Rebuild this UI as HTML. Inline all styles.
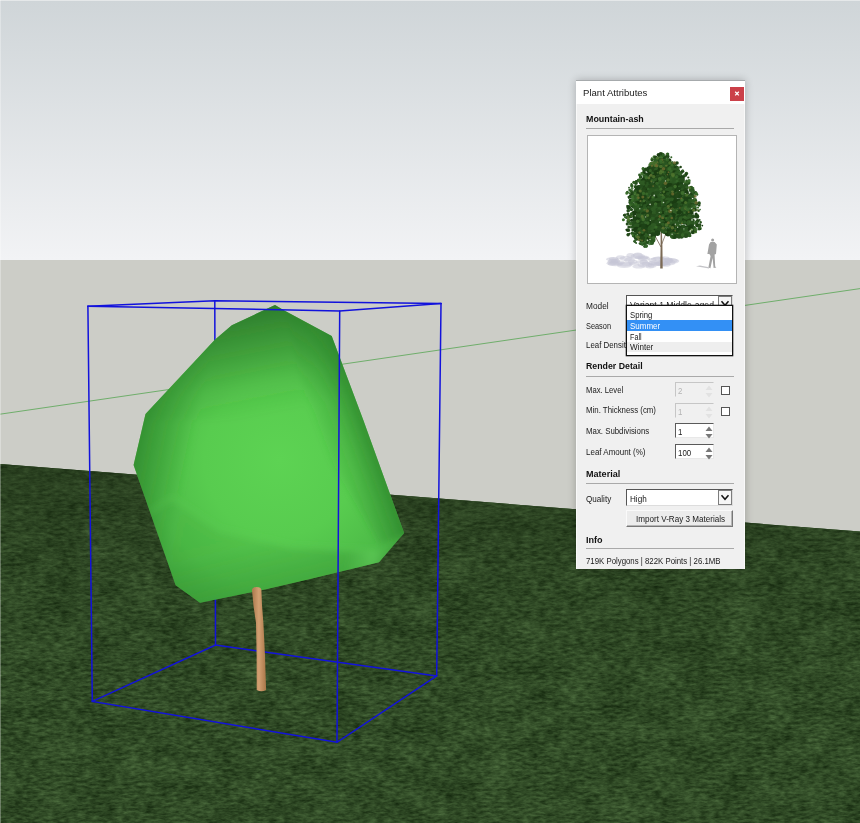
<!DOCTYPE html>
<html><head><meta charset="utf-8"><title>Plant Attributes</title>
<style>
html,body{margin:0;padding:0;}
body{width:860px;height:823px;overflow:hidden;position:relative;background:#cccdc7;font-family:"Liberation Sans",sans-serif;font-size:9px;color:#1a1a1a;}
#scene{position:absolute;left:0;top:0;}
#panel{position:absolute;left:576px;top:80px;width:169px;height:488px;background:#f0f0f0;border-top:1px solid #a6aaac;box-shadow:0 0 8px 0 rgba(0,0,0,0.24), inset -1px 0 0 #f9f9f9, inset 1px 0 0 #f9f9f9;}
#title{position:absolute;left:0;top:0;width:169px;height:22.5px;background:#fff;}
.t{position:absolute;white-space:nowrap;line-height:12px;height:12px;transform-origin:0 50%;}
.b{font-weight:bold;color:#111;}
.sep{position:absolute;left:10px;width:148px;height:1px;background:#a9a9a9;}
#close{position:absolute;left:154px;top:6px;width:14px;height:14px;background:#cb4049;}
.spin{position:absolute;left:99px;width:39px;height:15px;box-sizing:border-box;background:#fff;border-top:1px solid #5a5a5a;border-left:1px solid #5a5a5a;border-right:1px solid #e8e8e8;border-bottom:1px solid #e8e8e8;}
.spin.dis{background:#f0f0f0;border-top:1px solid #c6c6c6;border-left:1px solid #c6c6c6;border-right:1px solid #f0f0f0;border-bottom:1px solid #f0f0f0;color:#b4b4b4;}
.chk{position:absolute;left:145px;width:9px;height:9px;box-sizing:border-box;border:1px solid #555;background:#fff;}
.combo{position:absolute;left:50px;width:107px;height:17px;box-sizing:border-box;background:#fff;border-top:1px solid #555;border-left:1px solid #555;border-right:1px solid #ddd;border-bottom:1px solid #ddd;}
.cbtn{position:absolute;right:0;top:0;width:14px;height:15px;background:#f6f6f6;border:1px solid #7d7d7d;box-sizing:border-box;}
#list{position:absolute;left:50px;top:224px;width:107px;height:51px;box-sizing:border-box;border:1px solid #111;background:#fff;box-shadow:0 0 0 0.3px #111;}
#btn{position:absolute;left:50px;top:429px;width:107px;height:17px;box-sizing:border-box;background:#ececec;border-top:1px solid #fafafa;border-left:1px solid #fafafa;border-right:1px solid #777;border-bottom:1px solid #777;box-shadow:inset -1px -1px 0 #b5b5b5;}
</style></head><body>
<svg id="scene" width="860" height="823" viewBox="0 0 860 823">
<defs>
<linearGradient id="sky" x1="0" y1="0" x2="0" y2="1"><stop offset="0" stop-color="#cfd5d8"/><stop offset="1" stop-color="#f2f3f5"/></linearGradient>
<linearGradient id="grassg" x1="0" y1="0" x2="0" y2="1"><stop offset="0" stop-color="#29451f"/><stop offset="0.35" stop-color="#2d4d25"/><stop offset="1" stop-color="#305328"/></linearGradient>
<filter id="noise" x="0" y="0" width="100%" height="100%" color-interpolation-filters="sRGB">
<feTurbulence type="fractalNoise" baseFrequency="0.13 0.36" numOctaves="3" seed="4"/>
<feColorMatrix type="matrix" values="1 0 0 0 0  1 0 0 0 0  1 0 0 0 0  0 0 0 0 1" result="n1"/>
<feTurbulence type="fractalNoise" baseFrequency="0.025 0.05" numOctaves="2" seed="9"/>
<feColorMatrix type="matrix" values="1 0 0 0 0  1 0 0 0 0  1 0 0 0 0  0 0 0 0 1" result="n2"/>
<feComposite in="n1" in2="n2" operator="arithmetic" k1="0" k2="0.85" k3="0.4" k4="-0.125" result="n"/>
<feColorMatrix in="n" type="matrix" values="0.27 0 0 0 0.055  0.33 0 0 0 0.127  0.23 0 0 0 0.034  0 0 0 0 1"/>
</filter>
<linearGradient id="gshade" x1="0" y1="0" x2="0" y2="1"><stop offset="0" stop-color="#1c2c14" stop-opacity="0.42"/><stop offset="0.3" stop-color="#1c2c14" stop-opacity="0.12"/><stop offset="0.7" stop-color="#1c2c14" stop-opacity="0"/></linearGradient>
<radialGradient id="crown" gradientUnits="userSpaceOnUse" cx="280" cy="460" r="190" fx="280" fy="460">
<stop offset="0" stop-color="#5dd353"/><stop offset="0.4" stop-color="#58cc4f"/><stop offset="0.68" stop-color="#4dbb47"/><stop offset="0.88" stop-color="#3ea23a"/><stop offset="1" stop-color="#348f32"/></radialGradient>
<linearGradient id="crownTop" gradientUnits="userSpaceOnUse" x1="270" y1="300" x2="292" y2="410"><stop offset="0" stop-color="#2a7428" stop-opacity="0.85"/><stop offset="0.35" stop-color="#2a7428" stop-opacity="0.5"/><stop offset="0.7" stop-color="#2a7428" stop-opacity="0.15"/><stop offset="1" stop-color="#2a7428" stop-opacity="0"/></linearGradient>
<linearGradient id="crownLeft" gradientUnits="userSpaceOnUse" x1="134" y1="440" x2="192" y2="452"><stop offset="0" stop-color="#2d842b" stop-opacity="0.75"/><stop offset="1" stop-color="#2d842b" stop-opacity="0"/></linearGradient>
<linearGradient id="crownRight" gradientUnits="userSpaceOnUse" x1="370" y1="434" x2="322" y2="452"><stop offset="0" stop-color="#2c842b" stop-opacity="0.8"/><stop offset="0.5" stop-color="#2c842b" stop-opacity="0.3"/><stop offset="1" stop-color="#2c842b" stop-opacity="0"/></linearGradient>
<linearGradient id="crownBot" gradientUnits="userSpaceOnUse" x1="300" y1="592" x2="286" y2="535"><stop offset="0" stop-color="#3a9a37" stop-opacity="0.6"/><stop offset="1" stop-color="#3a9a37" stop-opacity="0.15"/></linearGradient>
<linearGradient id="crownBR" gradientUnits="userSpaceOnUse" x1="392" y1="548" x2="350" y2="540"><stop offset="0" stop-color="#6ad862" stop-opacity="0"/><stop offset="0.4" stop-color="#6ad862" stop-opacity="0.55"/><stop offset="1" stop-color="#6ad862" stop-opacity="0"/></linearGradient>
<filter id="soft" x="-10%" y="-10%" width="120%" height="120%"><feGaussianBlur stdDeviation="3"/></filter>
<linearGradient id="trunk" gradientUnits="userSpaceOnUse" x1="253" y1="0" x2="266" y2="0"><stop offset="0" stop-color="#b07e52"/><stop offset="0.45" stop-color="#d3a072"/><stop offset="1" stop-color="#a97749"/></linearGradient>
</defs>
<rect x="0" y="0" width="860" height="260" fill="url(#sky)"/>
<rect x="0" y="260" width="860" height="290" fill="#cccdc7"/>
<g>
<polygon points="0,464 860,531.6 860,823 0,823" fill="url(#grassg)"/>
<clipPath id="gclip"><polygon points="0,464 860,531.6 860,823 0,823"/></clipPath>
<g clip-path="url(#gclip)">
<rect x="0" y="460" width="860" height="363" filter="url(#noise)"/>
<rect x="0" y="460" width="860" height="363" fill="url(#gshade)"/>
</g>
</g>
<line x1="0" y1="414.2" x2="860" y2="288.6" stroke="#6fae6b" stroke-width="1"/>
<rect x="0" y="0" width="860" height="1" fill="#fff" opacity="0.45"/>
<rect x="0" y="0" width="1" height="823" fill="#fff" opacity="0.3"/>
<!-- back box edges -->
<g stroke="#1212dc" stroke-width="1.5" fill="none" stroke-linecap="round">
<path d="M87.9 306.2 L214.8 300.7 L441 303.6"/>
<path d="M214.8 300.7 L215.5 645.1"/>
<path d="M92.3 701.4 L215.5 645.1 L436.7 675.9"/>
</g>
<!-- crown -->
<clipPath id="cclip"><polygon points="275,305 284.3,310.4 331.7,336 363.3,420 404.1,533 379,562.2 310,579 267,589 200,602.7 175.6,585.2 133.6,465 145.5,414 214.8,339.8 231.8,325.2"/></clipPath>
<polygon points="275,305 284.3,310.4 331.7,336 363.3,420 404.1,533 379,562.2 310,579 267,589 200,602.7 175.6,585.2 133.6,465 145.5,414 214.8,339.8 231.8,325.2" fill="url(#crown)"/>
<g clip-path="url(#cclip)">
<g filter="url(#soft)">
<polygon points="250,290 300,295 345,336 370,420 300,420 200,420 140,420 145.5,400 214.8,330" fill="url(#crownTop)"/>
<polygon points="284.3,300 340,330 370,420 415,533 380,545 330,460 300,380" fill="url(#crownRight)"/>
<polygon points="120,465 145.5,400 214.8,339.8 231.8,325.2 240,600 175.6,600" fill="url(#crownLeft)"/>
<polygon points="415,533 379,572 310,589 267,599 200,612 165,590 140,512 172,498 220,530 292,547 377,551" fill="url(#crownBot)"/>
<polygon points="410,533 379,566 330,578 320,549 377,551" fill="url(#crownBR)"/>
<path d="M150 512 L172 498 L220 530 L292 547 L377 551" stroke="#66d65d" stroke-opacity="0.3" stroke-width="3" fill="none"/>
</g>
</g>
<!-- trunk -->
<path d="M252 590 Q252.2 587.2 256.5 587 Q261.2 587 261.4 590 L262 605 L263.4 623 L265 655 L266.1 690 Q261.5 692.5 256.7 690 L256.6 655 L256 623 L253.5 606 Z" fill="url(#trunk)"/>
<!-- front box edges -->
<g stroke="#1212dc" stroke-width="1.5" fill="none" stroke-linecap="round">
<path d="M87.9 306.2 L339.7 310.9 L441 303.6"/>
<path d="M87.9 306.2 L92.3 701.4 L337 742.3 L436.7 675.9 L441 303.6"/>
<path d="M339.7 310.9 L337 742.3"/>
</g>
<!-- thumbnail art (drawn in page coords) -->
</svg>
<div id="panel">
<div id="title"></div>
<div class="t" id="t_title" style="transform:scaleX(1.008);left:6.6px;top:6px;font-size:9.5px;">Plant Attributes</div>
<div id="close"><svg width="14" height="14" viewBox="0 0 14 14"><path d="M5.2 4.8 L8.8 8.4 M8.8 4.8 L5.2 8.4" stroke="#fff" stroke-width="1.3"/></svg></div>
<div class="t b" id="t_name" style="transform:scaleX(0.988);left:10px;top:32px;">Mountain-ash</div>
<div class="sep" style="top:47px;"></div>
<div id="thumb" style="position:absolute;left:11px;top:54px;width:150px;height:149px;box-sizing:border-box;border:1px solid #b4b4b4;background:#fff;"></div>

<div class="t" id="t_model" style="transform:scaleX(0.922);left:10px;top:218.5px;">Model</div>
<div class="combo" style="top:214px;"><div class="t" id="t_variant" style="transform:scaleX(0.930);left:3px;top:3px;font-size:9.3px;">Variant 1 Middle-aged</div><div class="cbtn"><svg style="position:absolute;left:-1px;top:-1px" width="14" height="15" viewBox="0 0 14 15"><path d="M3.5 5.3 L7 9.3 L10.5 5.3" stroke="#111" stroke-width="1.5" fill="none"/></svg></div></div>
<div class="t" id="t_season" style="transform:scaleX(0.819);left:10px;top:238.5px;">Season</div>
<div class="t" id="t_leafd" style="transform:scaleX(0.875);left:10px;top:257.5px;">Leaf Density</div>
<div id="list">
<div style="position:absolute;left:0;top:14px;width:105px;height:10.5px;background:#3390f5;"></div>
<div style="position:absolute;left:0;top:35.5px;width:105px;height:10px;background:#eeeeee;"></div>
<div class="t" id="t_spring" style="transform:scaleX(0.857);left:2.5px;top:2.5px;">Spring</div>
<div class="t" id="t_summer" style="transform:scaleX(0.888);left:2.5px;top:13.5px;color:#fff;">Summer</div>
<div class="t" id="t_fall" style="transform:scaleX(0.799);left:2.5px;top:24.5px;">Fall</div>
<div class="t" id="t_winter" style="transform:scaleX(0.896);left:2.5px;top:35px;">Winter</div>
</div>

<div class="t b" id="t_render" style="transform:scaleX(0.975);left:10px;top:279px;">Render Detail</div>
<div class="sep" style="top:295px;"></div>
<div class="t" id="t_maxl" style="transform:scaleX(0.855);left:10px;top:302.5px;">Max. Level</div>
<div class="spin dis" style="top:301px;"><div class="t" id="t_s1" style="transform:scaleX(0.875);left:2px;top:1.5px;">2</div><svg style="position:absolute;left:29px;top:1px" width="8" height="14" viewBox="0 0 8 14"><path d="M0.5 6 L4 1.5 L7.5 6 Z M0.5 9 L4 13.5 L7.5 9 Z" fill="#e2e2e2"/></svg></div>
<div class="chk" style="top:305px;"></div>
<div class="t" id="t_mint" style="transform:scaleX(0.871);left:10px;top:323px;">Min. Thickness (cm)</div>
<div class="spin dis" style="top:322px;"><div class="t" id="t_s2" style="transform:scaleX(0.875);left:2px;top:1.5px;">1</div><svg style="position:absolute;left:29px;top:1px" width="8" height="14" viewBox="0 0 8 14"><path d="M0.5 6 L4 1.5 L7.5 6 Z M0.5 9 L4 13.5 L7.5 9 Z" fill="#e2e2e2"/></svg></div>
<div class="chk" style="top:326px;"></div>
<div class="t" id="t_maxs" style="transform:scaleX(0.871);left:10px;top:343.5px;">Max. Subdivisions</div>
<div class="spin" style="top:342px;"><div class="t" id="t_s3" style="transform:scaleX(0.875);left:2px;top:1.5px;">1</div><svg style="position:absolute;left:29px;top:1px" width="8" height="14" viewBox="0 0 8 14"><path d="M0.5 6 L4 1.5 L7.5 6 Z M0.5 9 L4 13.5 L7.5 9 Z" fill="#787878"/></svg></div>
<div class="t" id="t_leafa" style="transform:scaleX(0.887);left:10px;top:364.5px;">Leaf Amount (%)</div>
<div class="spin" style="top:363px;"><div class="t" id="t_s4" style="transform:scaleX(0.875);left:2px;top:1.5px;">100</div><svg style="position:absolute;left:29px;top:1px" width="8" height="14" viewBox="0 0 8 14"><path d="M0.5 6 L4 1.5 L7.5 6 Z M0.5 9 L4 13.5 L7.5 9 Z" fill="#787878"/></svg></div>

<div class="t b" id="t_mat" style="transform:scaleX(1.008);left:10px;top:386.5px;">Material</div>
<div class="sep" style="top:402px;"></div>
<div class="t" id="t_qual" style="transform:scaleX(0.899);left:10px;top:411.5px;">Quality</div>
<div class="combo" style="top:408px;"><div class="t" id="t_high" style="transform:scaleX(0.902);left:3px;top:3px;">High</div><div class="cbtn"><svg style="position:absolute;left:-1px;top:-1px" width="14" height="15" viewBox="0 0 14 15"><path d="M3.5 5.3 L7 9.3 L10.5 5.3" stroke="#111" stroke-width="1.5" fill="none"/></svg></div></div>
<div id="btn"><div class="t" id="t_import" style="transform:scaleX(0.899);left:9px;top:2px;">Import V-Ray 3 Materials</div></div>
<div class="t b" id="t_info" style="transform:scaleX(1.006);left:10px;top:453px;">Info</div>
<div class="sep" style="top:467px;"></div>
<div class="t" id="t_stats" style="transform:scaleX(0.869);left:10px;top:474px;">719K Polygons | 822K Points | 26.1MB</div>
</div>
<svg style="position:absolute;left:0;top:0;pointer-events:none" width="860" height="823" viewBox="0 0 860 823">
<clipPath id="tclip"><rect x="588.5" y="136" width="148" height="147"/></clipPath>
<g clip-path="url(#tclip)">
<ellipse cx="617.1" cy="262.5" rx="7.7" ry="2.3" fill="#c6c6d6" opacity="0.5"/>
<ellipse cx="615.5" cy="261.0" rx="4.7" ry="2.3" fill="#c6c6d6" opacity="0.5"/>
<ellipse cx="620.5" cy="257.3" rx="4.4" ry="2.0" fill="#c6c6d6" opacity="0.5"/>
<ellipse cx="664.2" cy="264.1" rx="6.8" ry="1.7" fill="#c6c6d6" opacity="0.5"/>
<ellipse cx="671.2" cy="260.5" rx="6.6" ry="2.5" fill="#c6c6d6" opacity="0.5"/>
<ellipse cx="642.2" cy="261.8" rx="6.1" ry="1.7" fill="#c6c6d6" opacity="0.5"/>
<ellipse cx="645.8" cy="263.9" rx="4.1" ry="2.2" fill="#c6c6d6" opacity="0.5"/>
<ellipse cx="612.7" cy="263.2" rx="6.1" ry="2.5" fill="#c6c6d6" opacity="0.5"/>
<ellipse cx="614.0" cy="261.2" rx="5.8" ry="2.0" fill="#c6c6d6" opacity="0.5"/>
<ellipse cx="671.9" cy="261.1" rx="7.4" ry="2.6" fill="#c6c6d6" opacity="0.5"/>
<ellipse cx="633.9" cy="263.8" rx="5.2" ry="1.7" fill="#c6c6d6" opacity="0.5"/>
<ellipse cx="642.1" cy="257.4" rx="7.4" ry="2.1" fill="#c6c6d6" opacity="0.5"/>
<ellipse cx="668.4" cy="259.8" rx="4.0" ry="1.9" fill="#c6c6d6" opacity="0.5"/>
<ellipse cx="658.5" cy="259.0" rx="7.9" ry="2.2" fill="#c6c6d6" opacity="0.5"/>
<ellipse cx="662.8" cy="263.3" rx="7.1" ry="2.0" fill="#c6c6d6" opacity="0.5"/>
<ellipse cx="655.8" cy="263.0" rx="7.9" ry="2.7" fill="#c6c6d6" opacity="0.5"/>
<ellipse cx="651.7" cy="263.2" rx="4.4" ry="1.7" fill="#c6c6d6" opacity="0.5"/>
<ellipse cx="643.9" cy="258.8" rx="6.2" ry="2.2" fill="#c6c6d6" opacity="0.5"/>
<ellipse cx="650.0" cy="266.0" rx="4.5" ry="2.5" fill="#c6c6d6" opacity="0.5"/>
<ellipse cx="655.4" cy="263.8" rx="4.9" ry="2.0" fill="#c6c6d6" opacity="0.5"/>
<ellipse cx="668.2" cy="260.2" rx="5.2" ry="2.8" fill="#c6c6d6" opacity="0.5"/>
<ellipse cx="644.9" cy="264.9" rx="7.4" ry="2.5" fill="#c6c6d6" opacity="0.5"/>
<ellipse cx="665.7" cy="264.7" rx="4.9" ry="2.0" fill="#c6c6d6" opacity="0.5"/>
<ellipse cx="642.6" cy="257.8" rx="5.2" ry="1.7" fill="#c6c6d6" opacity="0.5"/>
<ellipse cx="660.6" cy="263.7" rx="5.0" ry="2.4" fill="#c6c6d6" opacity="0.5"/>
<ellipse cx="625.1" cy="264.1" rx="7.8" ry="2.3" fill="#c6c6d6" opacity="0.5"/>
<ellipse cx="613.4" cy="258.7" rx="4.7" ry="1.8" fill="#c6c6d6" opacity="0.5"/>
<ellipse cx="664.3" cy="258.2" rx="5.0" ry="1.9" fill="#c6c6d6" opacity="0.5"/>
<ellipse cx="637.9" cy="255.4" rx="4.8" ry="2.9" fill="#c6c6d6" opacity="0.5"/>
<ellipse cx="658.4" cy="258.1" rx="5.7" ry="1.7" fill="#c6c6d6" opacity="0.5"/>
<ellipse cx="670.5" cy="262.6" rx="5.0" ry="2.6" fill="#c6c6d6" opacity="0.5"/>
<ellipse cx="638.7" cy="266.6" rx="6.4" ry="2.0" fill="#c6c6d6" opacity="0.5"/>
<ellipse cx="652.3" cy="265.7" rx="4.3" ry="1.9" fill="#c6c6d6" opacity="0.5"/>
<ellipse cx="612.5" cy="259.2" rx="6.5" ry="2.0" fill="#c6c6d6" opacity="0.5"/>
<ellipse cx="652.5" cy="259.9" rx="4.1" ry="2.0" fill="#c6c6d6" opacity="0.5"/>
<ellipse cx="632.6" cy="261.7" rx="4.7" ry="2.1" fill="#c6c6d6" opacity="0.5"/>
<ellipse cx="629.6" cy="260.2" rx="5.4" ry="2.8" fill="#c6c6d6" opacity="0.5"/>
<ellipse cx="665.7" cy="260.6" rx="6.8" ry="2.4" fill="#c6c6d6" opacity="0.5"/>
<ellipse cx="643.8" cy="262.1" rx="4.1" ry="2.9" fill="#c6c6d6" opacity="0.5"/>
<ellipse cx="630.5" cy="255.6" rx="4.1" ry="2.5" fill="#c6c6d6" opacity="0.5"/>
<ellipse cx="612.8" cy="261.8" rx="5.3" ry="3.0" fill="#c6c6d6" opacity="0.5"/>
<ellipse cx="661.1" cy="263.2" rx="6.9" ry="2.9" fill="#c6c6d6" opacity="0.5"/>
<ellipse cx="637.8" cy="256.2" rx="7.2" ry="2.9" fill="#c6c6d6" opacity="0.5"/>
<ellipse cx="624.2" cy="265.2" rx="7.6" ry="2.8" fill="#c6c6d6" opacity="0.5"/>
<ellipse cx="615.3" cy="263.9" rx="7.5" ry="2.4" fill="#c6c6d6" opacity="0.5"/>
<ellipse cx="626.0" cy="258.6" rx="6.3" ry="2.5" fill="#c6c6d6" opacity="0.5"/>
<path d="M660.2 268.4 L662.7 268.6 L662.4 245 L661.7 225 L660.6 225 L660.6 245 Z" fill="#7b6a55"/>
<path d="M661 247 L655 236" stroke="#6d5c48" stroke-width="0.8" fill="none"/>
<path d="M661.8 244 L666.5 232" stroke="#6d5c48" stroke-width="0.7" fill="none"/>
<circle cx="660.9" cy="154.3" r="2.3" fill="#224618"/>
<circle cx="662.8" cy="155.0" r="1.9" fill="#1a3c12"/>
<circle cx="659.1" cy="156.3" r="1.5" fill="#2e5a23"/>
<circle cx="660.2" cy="156.2" r="1.6" fill="#2e5a23"/>
<circle cx="664.4" cy="157.3" r="1.8" fill="#254d1c"/>
<circle cx="667.3" cy="156.6" r="2.3" fill="#224618"/>
<circle cx="656.1" cy="160.6" r="1.9" fill="#2a5520"/>
<circle cx="657.4" cy="160.4" r="3.2" fill="#254d1c"/>
<circle cx="662.0" cy="160.3" r="2.9" fill="#2a5520"/>
<circle cx="663.4" cy="159.7" r="2.7" fill="#1d4216"/>
<circle cx="667.6" cy="161.7" r="2.6" fill="#254d1c"/>
<circle cx="669.2" cy="160.5" r="2.2" fill="#1a3c12"/>
<circle cx="652.4" cy="163.9" r="2.3" fill="#2e5a23"/>
<circle cx="655.0" cy="162.9" r="2.3" fill="#2e5a23"/>
<circle cx="657.0" cy="164.4" r="2.9" fill="#2a5520"/>
<circle cx="661.5" cy="164.1" r="3.0" fill="#1a3c12"/>
<circle cx="664.0" cy="162.8" r="3.2" fill="#254d1c"/>
<circle cx="667.8" cy="164.6" r="3.4" fill="#1d4216"/>
<circle cx="670.0" cy="164.2" r="3.0" fill="#2a5520"/>
<circle cx="674.2" cy="164.3" r="1.9" fill="#254d1c"/>
<circle cx="649.6" cy="167.8" r="1.5" fill="#254d1c"/>
<circle cx="651.5" cy="166.8" r="3.1" fill="#2e5a23"/>
<circle cx="655.1" cy="168.4" r="2.5" fill="#224618"/>
<circle cx="659.1" cy="166.2" r="3.3" fill="#224618"/>
<circle cx="660.8" cy="167.1" r="2.5" fill="#1d4216"/>
<circle cx="663.8" cy="167.4" r="3.3" fill="#2a5520"/>
<circle cx="667.0" cy="167.6" r="2.5" fill="#224618"/>
<circle cx="671.0" cy="167.9" r="3.3" fill="#1d4216"/>
<circle cx="672.5" cy="168.2" r="3.4" fill="#2a5520"/>
<circle cx="676.2" cy="167.9" r="2.3" fill="#1d4216"/>
<circle cx="645.8" cy="169.5" r="2.0" fill="#2a5520"/>
<circle cx="649.4" cy="169.4" r="3.2" fill="#1d4216"/>
<circle cx="652.6" cy="169.4" r="2.9" fill="#224618"/>
<circle cx="656.7" cy="169.6" r="2.5" fill="#2e5a23"/>
<circle cx="660.3" cy="170.5" r="3.0" fill="#1a3c12"/>
<circle cx="663.7" cy="170.5" r="3.3" fill="#1d4216"/>
<circle cx="666.5" cy="170.4" r="2.9" fill="#224618"/>
<circle cx="669.3" cy="169.7" r="2.9" fill="#2e5a23"/>
<circle cx="671.9" cy="170.9" r="3.4" fill="#2e5a23"/>
<circle cx="675.0" cy="171.3" r="3.4" fill="#2e5a23"/>
<circle cx="678.5" cy="170.5" r="1.6" fill="#1d4216"/>
<circle cx="643.9" cy="172.7" r="2.0" fill="#1a3c12"/>
<circle cx="646.9" cy="175.0" r="2.4" fill="#1d4216"/>
<circle cx="650.4" cy="172.8" r="2.9" fill="#1a3c12"/>
<circle cx="654.1" cy="174.5" r="2.7" fill="#254d1c"/>
<circle cx="656.2" cy="172.9" r="2.8" fill="#1a3c12"/>
<circle cx="659.5" cy="172.9" r="2.8" fill="#1d4216"/>
<circle cx="663.6" cy="172.9" r="3.2" fill="#1d4216"/>
<circle cx="664.6" cy="173.0" r="2.3" fill="#2a5520"/>
<circle cx="668.5" cy="173.5" r="3.0" fill="#1d4216"/>
<circle cx="672.1" cy="174.0" r="3.2" fill="#2e5a23"/>
<circle cx="674.6" cy="173.1" r="2.9" fill="#1a3c12"/>
<circle cx="677.2" cy="174.1" r="3.2" fill="#2e5a23"/>
<circle cx="680.7" cy="173.1" r="2.1" fill="#2e5a23"/>
<circle cx="640.7" cy="177.2" r="1.6" fill="#224618"/>
<circle cx="645.0" cy="176.7" r="2.5" fill="#2e5a23"/>
<circle cx="647.5" cy="178.1" r="2.5" fill="#254d1c"/>
<circle cx="652.1" cy="176.2" r="2.6" fill="#224618"/>
<circle cx="653.5" cy="176.8" r="2.8" fill="#1a3c12"/>
<circle cx="657.8" cy="177.6" r="2.5" fill="#224618"/>
<circle cx="661.4" cy="175.9" r="2.5" fill="#224618"/>
<circle cx="663.9" cy="177.9" r="2.7" fill="#224618"/>
<circle cx="667.5" cy="177.7" r="2.9" fill="#224618"/>
<circle cx="671.5" cy="177.8" r="2.8" fill="#1d4216"/>
<circle cx="672.9" cy="177.2" r="2.9" fill="#2e5a23"/>
<circle cx="677.2" cy="176.4" r="2.4" fill="#254d1c"/>
<circle cx="681.3" cy="178.3" r="3.3" fill="#1d4216"/>
<circle cx="684.0" cy="176.2" r="1.6" fill="#1d4216"/>
<circle cx="638.7" cy="180.3" r="1.9" fill="#2e5a23"/>
<circle cx="641.9" cy="180.7" r="2.3" fill="#254d1c"/>
<circle cx="644.6" cy="180.3" r="3.1" fill="#1a3c12"/>
<circle cx="649.5" cy="180.7" r="2.4" fill="#1d4216"/>
<circle cx="651.2" cy="179.4" r="3.2" fill="#224618"/>
<circle cx="655.8" cy="180.6" r="2.5" fill="#2e5a23"/>
<circle cx="659.1" cy="181.1" r="2.6" fill="#1d4216"/>
<circle cx="661.6" cy="181.1" r="3.2" fill="#1a3c12"/>
<circle cx="663.3" cy="180.0" r="2.9" fill="#2a5520"/>
<circle cx="667.9" cy="181.0" r="2.7" fill="#224618"/>
<circle cx="669.7" cy="181.1" r="2.6" fill="#1d4216"/>
<circle cx="672.4" cy="180.1" r="3.0" fill="#2e5a23"/>
<circle cx="675.6" cy="179.9" r="3.4" fill="#2a5520"/>
<circle cx="679.5" cy="180.8" r="2.9" fill="#2e5a23"/>
<circle cx="682.0" cy="180.4" r="2.8" fill="#254d1c"/>
<circle cx="686.6" cy="181.0" r="1.5" fill="#2e5a23"/>
<circle cx="635.9" cy="183.1" r="2.0" fill="#254d1c"/>
<circle cx="640.4" cy="182.5" r="1.7" fill="#2a5520"/>
<circle cx="643.4" cy="183.7" r="3.4" fill="#2e5a23"/>
<circle cx="647.3" cy="182.7" r="2.8" fill="#224618"/>
<circle cx="648.7" cy="183.9" r="3.1" fill="#1d4216"/>
<circle cx="652.7" cy="184.8" r="2.7" fill="#254d1c"/>
<circle cx="657.0" cy="183.8" r="3.0" fill="#1a3c12"/>
<circle cx="660.4" cy="183.5" r="2.9" fill="#2e5a23"/>
<circle cx="662.1" cy="183.8" r="2.8" fill="#2a5520"/>
<circle cx="666.0" cy="183.2" r="3.1" fill="#2a5520"/>
<circle cx="667.9" cy="184.4" r="2.9" fill="#224618"/>
<circle cx="671.4" cy="184.3" r="2.7" fill="#2a5520"/>
<circle cx="676.1" cy="182.6" r="3.4" fill="#2a5520"/>
<circle cx="677.7" cy="184.7" r="2.8" fill="#1a3c12"/>
<circle cx="681.3" cy="184.3" r="2.3" fill="#1d4216"/>
<circle cx="686.2" cy="184.2" r="2.4" fill="#254d1c"/>
<circle cx="688.6" cy="182.8" r="1.9" fill="#254d1c"/>
<circle cx="635.5" cy="186.7" r="1.8" fill="#254d1c"/>
<circle cx="638.3" cy="186.9" r="2.0" fill="#1a3c12"/>
<circle cx="640.9" cy="187.6" r="3.2" fill="#254d1c"/>
<circle cx="645.6" cy="187.6" r="2.6" fill="#1d4216"/>
<circle cx="647.8" cy="186.5" r="2.9" fill="#2a5520"/>
<circle cx="650.5" cy="187.3" r="3.1" fill="#224618"/>
<circle cx="654.6" cy="187.3" r="3.1" fill="#254d1c"/>
<circle cx="658.7" cy="187.0" r="3.0" fill="#254d1c"/>
<circle cx="661.9" cy="185.9" r="2.4" fill="#2a5520"/>
<circle cx="663.7" cy="185.9" r="2.3" fill="#254d1c"/>
<circle cx="667.6" cy="186.0" r="2.4" fill="#224618"/>
<circle cx="670.0" cy="186.4" r="3.4" fill="#1a3c12"/>
<circle cx="674.1" cy="186.3" r="2.7" fill="#224618"/>
<circle cx="676.5" cy="187.9" r="3.2" fill="#1a3c12"/>
<circle cx="681.5" cy="187.3" r="3.1" fill="#254d1c"/>
<circle cx="683.9" cy="187.6" r="2.7" fill="#254d1c"/>
<circle cx="687.0" cy="187.4" r="1.8" fill="#2e5a23"/>
<circle cx="691.2" cy="187.8" r="2.1" fill="#2e5a23"/>
<circle cx="631.4" cy="191.2" r="1.6" fill="#2e5a23"/>
<circle cx="635.7" cy="191.1" r="2.2" fill="#1d4216"/>
<circle cx="637.7" cy="189.6" r="3.0" fill="#1d4216"/>
<circle cx="642.4" cy="190.3" r="3.1" fill="#2a5520"/>
<circle cx="644.6" cy="189.4" r="2.7" fill="#224618"/>
<circle cx="647.9" cy="191.3" r="2.7" fill="#1a3c12"/>
<circle cx="651.6" cy="191.3" r="3.3" fill="#2a5520"/>
<circle cx="654.5" cy="191.0" r="2.6" fill="#2a5520"/>
<circle cx="657.2" cy="191.4" r="3.1" fill="#2e5a23"/>
<circle cx="660.4" cy="190.0" r="2.7" fill="#2a5520"/>
<circle cx="664.6" cy="190.5" r="3.2" fill="#224618"/>
<circle cx="667.5" cy="191.0" r="2.9" fill="#2e5a23"/>
<circle cx="670.7" cy="189.5" r="3.1" fill="#2a5520"/>
<circle cx="674.5" cy="189.6" r="2.4" fill="#254d1c"/>
<circle cx="677.1" cy="191.4" r="3.0" fill="#1a3c12"/>
<circle cx="679.1" cy="190.4" r="3.2" fill="#1d4216"/>
<circle cx="682.9" cy="189.8" r="2.4" fill="#2a5520"/>
<circle cx="685.5" cy="190.6" r="2.5" fill="#224618"/>
<circle cx="690.4" cy="190.1" r="1.9" fill="#2e5a23"/>
<circle cx="692.5" cy="190.2" r="2.2" fill="#2a5520"/>
<circle cx="632.2" cy="193.6" r="2.1" fill="#224618"/>
<circle cx="635.3" cy="192.5" r="2.4" fill="#2a5520"/>
<circle cx="639.1" cy="194.3" r="3.2" fill="#1a3c12"/>
<circle cx="642.6" cy="193.9" r="2.9" fill="#224618"/>
<circle cx="643.6" cy="192.7" r="3.3" fill="#254d1c"/>
<circle cx="647.4" cy="192.8" r="3.0" fill="#224618"/>
<circle cx="650.4" cy="192.9" r="2.8" fill="#2a5520"/>
<circle cx="653.9" cy="194.5" r="2.8" fill="#224618"/>
<circle cx="656.8" cy="194.0" r="3.2" fill="#254d1c"/>
<circle cx="662.0" cy="194.2" r="2.3" fill="#1a3c12"/>
<circle cx="665.2" cy="192.5" r="2.4" fill="#254d1c"/>
<circle cx="667.1" cy="193.8" r="3.0" fill="#1a3c12"/>
<circle cx="670.9" cy="192.9" r="2.5" fill="#2a5520"/>
<circle cx="673.7" cy="194.6" r="3.3" fill="#224618"/>
<circle cx="677.3" cy="194.4" r="2.8" fill="#2a5520"/>
<circle cx="680.4" cy="193.4" r="3.4" fill="#224618"/>
<circle cx="683.8" cy="194.7" r="2.8" fill="#254d1c"/>
<circle cx="686.7" cy="192.9" r="2.4" fill="#1a3c12"/>
<circle cx="691.3" cy="194.3" r="2.2" fill="#1d4216"/>
<circle cx="693.8" cy="193.0" r="1.9" fill="#2a5520"/>
<circle cx="631.1" cy="196.3" r="2.3" fill="#1a3c12"/>
<circle cx="633.7" cy="196.5" r="2.3" fill="#2e5a23"/>
<circle cx="636.9" cy="197.5" r="3.0" fill="#2e5a23"/>
<circle cx="641.2" cy="196.1" r="3.1" fill="#1d4216"/>
<circle cx="643.7" cy="197.9" r="2.5" fill="#254d1c"/>
<circle cx="646.7" cy="196.3" r="3.1" fill="#1d4216"/>
<circle cx="652.0" cy="197.4" r="2.4" fill="#224618"/>
<circle cx="654.5" cy="197.8" r="2.6" fill="#254d1c"/>
<circle cx="657.4" cy="197.9" r="2.4" fill="#1a3c12"/>
<circle cx="660.2" cy="197.0" r="2.9" fill="#254d1c"/>
<circle cx="665.3" cy="198.0" r="2.6" fill="#1a3c12"/>
<circle cx="666.5" cy="196.4" r="2.8" fill="#224618"/>
<circle cx="669.8" cy="195.9" r="2.5" fill="#224618"/>
<circle cx="673.9" cy="196.8" r="3.4" fill="#1d4216"/>
<circle cx="677.8" cy="195.7" r="2.7" fill="#224618"/>
<circle cx="680.7" cy="196.4" r="2.4" fill="#1d4216"/>
<circle cx="684.9" cy="197.7" r="3.1" fill="#2e5a23"/>
<circle cx="686.6" cy="197.2" r="3.3" fill="#224618"/>
<circle cx="690.2" cy="196.5" r="2.1" fill="#2a5520"/>
<circle cx="693.3" cy="196.6" r="1.8" fill="#2a5520"/>
<circle cx="630.7" cy="200.7" r="2.2" fill="#1d4216"/>
<circle cx="632.8" cy="200.5" r="2.1" fill="#254d1c"/>
<circle cx="636.2" cy="200.0" r="3.2" fill="#2e5a23"/>
<circle cx="640.6" cy="199.2" r="2.3" fill="#1d4216"/>
<circle cx="643.2" cy="200.9" r="2.7" fill="#1a3c12"/>
<circle cx="647.6" cy="199.3" r="2.5" fill="#254d1c"/>
<circle cx="650.5" cy="199.9" r="2.7" fill="#1a3c12"/>
<circle cx="653.3" cy="200.7" r="3.0" fill="#2a5520"/>
<circle cx="657.3" cy="200.9" r="3.0" fill="#2e5a23"/>
<circle cx="659.5" cy="199.6" r="2.5" fill="#2a5520"/>
<circle cx="663.0" cy="199.3" r="2.7" fill="#2e5a23"/>
<circle cx="665.4" cy="199.7" r="2.4" fill="#224618"/>
<circle cx="668.2" cy="200.8" r="3.3" fill="#2e5a23"/>
<circle cx="671.6" cy="200.5" r="2.9" fill="#2e5a23"/>
<circle cx="675.9" cy="201.4" r="2.9" fill="#224618"/>
<circle cx="679.1" cy="201.2" r="2.9" fill="#1d4216"/>
<circle cx="682.2" cy="199.5" r="2.4" fill="#254d1c"/>
<circle cx="685.0" cy="200.0" r="2.7" fill="#1d4216"/>
<circle cx="689.3" cy="199.9" r="2.8" fill="#1d4216"/>
<circle cx="691.4" cy="200.8" r="2.0" fill="#2e5a23"/>
<circle cx="694.8" cy="200.3" r="2.3" fill="#2a5520"/>
<circle cx="630.2" cy="202.6" r="1.8" fill="#2a5520"/>
<circle cx="632.6" cy="203.7" r="1.7" fill="#2e5a23"/>
<circle cx="637.2" cy="203.4" r="2.7" fill="#224618"/>
<circle cx="638.9" cy="204.1" r="3.2" fill="#1a3c12"/>
<circle cx="643.3" cy="203.8" r="3.1" fill="#254d1c"/>
<circle cx="645.5" cy="203.4" r="2.5" fill="#1a3c12"/>
<circle cx="648.6" cy="203.3" r="2.7" fill="#254d1c"/>
<circle cx="652.2" cy="203.7" r="2.7" fill="#224618"/>
<circle cx="656.7" cy="204.0" r="3.2" fill="#1a3c12"/>
<circle cx="660.4" cy="203.7" r="2.8" fill="#1a3c12"/>
<circle cx="663.6" cy="204.5" r="2.9" fill="#1a3c12"/>
<circle cx="666.5" cy="203.5" r="3.4" fill="#224618"/>
<circle cx="668.9" cy="203.3" r="2.9" fill="#2e5a23"/>
<circle cx="672.0" cy="203.5" r="2.8" fill="#1d4216"/>
<circle cx="675.2" cy="202.4" r="3.1" fill="#1a3c12"/>
<circle cx="679.5" cy="203.7" r="3.1" fill="#2a5520"/>
<circle cx="683.1" cy="204.4" r="2.6" fill="#1a3c12"/>
<circle cx="684.8" cy="204.4" r="3.4" fill="#1a3c12"/>
<circle cx="689.2" cy="203.6" r="2.6" fill="#2a5520"/>
<circle cx="692.4" cy="204.6" r="2.4" fill="#224618"/>
<circle cx="696.4" cy="203.9" r="1.9" fill="#254d1c"/>
<circle cx="628.7" cy="207.4" r="2.3" fill="#1d4216"/>
<circle cx="632.7" cy="205.9" r="2.0" fill="#1a3c12"/>
<circle cx="634.8" cy="206.2" r="2.6" fill="#2a5520"/>
<circle cx="638.5" cy="206.7" r="2.8" fill="#2e5a23"/>
<circle cx="642.4" cy="206.5" r="2.9" fill="#1d4216"/>
<circle cx="645.5" cy="206.7" r="2.6" fill="#2a5520"/>
<circle cx="649.3" cy="207.8" r="3.4" fill="#1a3c12"/>
<circle cx="653.5" cy="206.1" r="3.2" fill="#224618"/>
<circle cx="656.9" cy="206.1" r="3.2" fill="#2a5520"/>
<circle cx="660.2" cy="205.6" r="3.0" fill="#224618"/>
<circle cx="663.8" cy="206.1" r="3.0" fill="#254d1c"/>
<circle cx="667.0" cy="207.9" r="3.0" fill="#2a5520"/>
<circle cx="669.8" cy="206.4" r="3.3" fill="#1a3c12"/>
<circle cx="673.1" cy="205.9" r="3.1" fill="#1a3c12"/>
<circle cx="675.7" cy="206.0" r="3.2" fill="#1d4216"/>
<circle cx="679.7" cy="206.1" r="2.5" fill="#254d1c"/>
<circle cx="682.6" cy="206.3" r="2.6" fill="#224618"/>
<circle cx="685.9" cy="205.9" r="2.9" fill="#2a5520"/>
<circle cx="690.1" cy="206.0" r="2.5" fill="#254d1c"/>
<circle cx="692.9" cy="205.8" r="1.9" fill="#2e5a23"/>
<circle cx="694.8" cy="207.8" r="2.0" fill="#2e5a23"/>
<circle cx="628.2" cy="210.8" r="1.8" fill="#254d1c"/>
<circle cx="631.4" cy="209.6" r="1.7" fill="#254d1c"/>
<circle cx="636.4" cy="209.0" r="2.8" fill="#2e5a23"/>
<circle cx="638.2" cy="211.1" r="2.8" fill="#254d1c"/>
<circle cx="640.7" cy="210.8" r="3.3" fill="#2a5520"/>
<circle cx="645.3" cy="210.8" r="2.9" fill="#2e5a23"/>
<circle cx="648.9" cy="210.4" r="3.4" fill="#224618"/>
<circle cx="652.4" cy="209.3" r="3.2" fill="#254d1c"/>
<circle cx="653.6" cy="209.9" r="3.0" fill="#2e5a23"/>
<circle cx="658.4" cy="210.8" r="3.2" fill="#254d1c"/>
<circle cx="660.4" cy="210.2" r="3.2" fill="#2e5a23"/>
<circle cx="664.2" cy="209.0" r="3.0" fill="#224618"/>
<circle cx="666.3" cy="210.0" r="3.3" fill="#2a5520"/>
<circle cx="669.8" cy="208.9" r="2.8" fill="#1a3c12"/>
<circle cx="673.9" cy="210.6" r="3.2" fill="#1d4216"/>
<circle cx="676.0" cy="211.1" r="2.9" fill="#2e5a23"/>
<circle cx="680.5" cy="210.6" r="3.0" fill="#1d4216"/>
<circle cx="683.0" cy="209.0" r="2.6" fill="#2e5a23"/>
<circle cx="687.3" cy="210.8" r="3.1" fill="#1a3c12"/>
<circle cx="688.9" cy="210.9" r="2.5" fill="#2a5520"/>
<circle cx="692.5" cy="210.1" r="2.0" fill="#1a3c12"/>
<circle cx="695.3" cy="209.9" r="1.7" fill="#1d4216"/>
<circle cx="627.8" cy="214.0" r="1.6" fill="#224618"/>
<circle cx="631.8" cy="214.0" r="1.7" fill="#2e5a23"/>
<circle cx="634.3" cy="213.1" r="2.6" fill="#1a3c12"/>
<circle cx="639.4" cy="214.5" r="3.0" fill="#224618"/>
<circle cx="642.2" cy="214.0" r="2.6" fill="#2a5520"/>
<circle cx="643.9" cy="214.3" r="2.8" fill="#1d4216"/>
<circle cx="649.1" cy="213.1" r="2.7" fill="#2e5a23"/>
<circle cx="650.6" cy="212.6" r="2.9" fill="#1d4216"/>
<circle cx="655.1" cy="213.6" r="3.3" fill="#2e5a23"/>
<circle cx="658.8" cy="212.6" r="3.2" fill="#254d1c"/>
<circle cx="660.7" cy="214.1" r="2.5" fill="#2a5520"/>
<circle cx="663.6" cy="214.1" r="3.2" fill="#1a3c12"/>
<circle cx="666.7" cy="212.7" r="2.8" fill="#2a5520"/>
<circle cx="670.6" cy="213.4" r="3.0" fill="#254d1c"/>
<circle cx="674.8" cy="212.7" r="2.7" fill="#1d4216"/>
<circle cx="676.1" cy="212.9" r="3.3" fill="#2e5a23"/>
<circle cx="679.2" cy="212.6" r="2.6" fill="#1a3c12"/>
<circle cx="683.8" cy="213.8" r="2.5" fill="#1d4216"/>
<circle cx="686.5" cy="212.6" r="3.3" fill="#2a5520"/>
<circle cx="689.2" cy="212.8" r="3.2" fill="#1d4216"/>
<circle cx="692.1" cy="213.0" r="1.6" fill="#1a3c12"/>
<circle cx="696.1" cy="214.0" r="1.5" fill="#1a3c12"/>
<circle cx="628.8" cy="216.7" r="2.0" fill="#254d1c"/>
<circle cx="630.6" cy="216.2" r="2.0" fill="#254d1c"/>
<circle cx="635.0" cy="216.8" r="2.6" fill="#1a3c12"/>
<circle cx="638.6" cy="215.9" r="2.5" fill="#2a5520"/>
<circle cx="641.6" cy="216.6" r="2.5" fill="#2e5a23"/>
<circle cx="645.6" cy="216.0" r="2.6" fill="#2a5520"/>
<circle cx="648.3" cy="215.8" r="3.2" fill="#224618"/>
<circle cx="651.5" cy="216.9" r="3.2" fill="#224618"/>
<circle cx="654.0" cy="217.1" r="3.3" fill="#254d1c"/>
<circle cx="657.9" cy="216.3" r="2.4" fill="#2a5520"/>
<circle cx="660.3" cy="217.0" r="2.4" fill="#1a3c12"/>
<circle cx="663.3" cy="216.7" r="2.8" fill="#2a5520"/>
<circle cx="667.0" cy="217.2" r="2.5" fill="#1a3c12"/>
<circle cx="670.0" cy="217.3" r="2.7" fill="#224618"/>
<circle cx="673.3" cy="215.7" r="2.7" fill="#1a3c12"/>
<circle cx="677.9" cy="216.6" r="2.6" fill="#2e5a23"/>
<circle cx="680.0" cy="217.7" r="3.3" fill="#1d4216"/>
<circle cx="683.4" cy="215.7" r="2.7" fill="#1d4216"/>
<circle cx="686.7" cy="217.5" r="2.6" fill="#224618"/>
<circle cx="689.8" cy="216.1" r="2.3" fill="#2a5520"/>
<circle cx="693.0" cy="216.4" r="2.2" fill="#254d1c"/>
<circle cx="697.0" cy="216.4" r="2.3" fill="#1d4216"/>
<circle cx="628.5" cy="221.1" r="2.1" fill="#2e5a23"/>
<circle cx="631.7" cy="220.3" r="1.6" fill="#1a3c12"/>
<circle cx="635.8" cy="219.7" r="3.3" fill="#1d4216"/>
<circle cx="638.9" cy="220.4" r="2.6" fill="#1a3c12"/>
<circle cx="641.1" cy="221.1" r="2.5" fill="#254d1c"/>
<circle cx="644.1" cy="219.4" r="2.5" fill="#2e5a23"/>
<circle cx="646.7" cy="220.1" r="2.7" fill="#254d1c"/>
<circle cx="651.3" cy="220.8" r="3.1" fill="#1d4216"/>
<circle cx="654.7" cy="220.1" r="3.2" fill="#2a5520"/>
<circle cx="657.1" cy="219.0" r="2.3" fill="#224618"/>
<circle cx="660.3" cy="219.8" r="2.5" fill="#254d1c"/>
<circle cx="665.0" cy="219.2" r="3.0" fill="#1a3c12"/>
<circle cx="668.2" cy="219.5" r="2.8" fill="#2a5520"/>
<circle cx="671.4" cy="220.1" r="2.6" fill="#254d1c"/>
<circle cx="673.7" cy="220.5" r="3.3" fill="#224618"/>
<circle cx="676.4" cy="219.0" r="2.4" fill="#1d4216"/>
<circle cx="681.5" cy="219.5" r="3.2" fill="#2e5a23"/>
<circle cx="684.5" cy="220.0" r="2.5" fill="#1a3c12"/>
<circle cx="688.0" cy="218.9" r="2.6" fill="#2e5a23"/>
<circle cx="690.9" cy="220.5" r="2.6" fill="#224618"/>
<circle cx="693.0" cy="220.5" r="1.8" fill="#254d1c"/>
<circle cx="697.7" cy="220.8" r="1.9" fill="#224618"/>
<circle cx="627.3" cy="223.9" r="1.6" fill="#254d1c"/>
<circle cx="631.2" cy="223.7" r="1.7" fill="#1d4216"/>
<circle cx="634.7" cy="223.8" r="3.2" fill="#254d1c"/>
<circle cx="637.5" cy="222.8" r="2.6" fill="#224618"/>
<circle cx="641.0" cy="224.3" r="3.4" fill="#1d4216"/>
<circle cx="643.7" cy="224.5" r="3.3" fill="#254d1c"/>
<circle cx="647.3" cy="223.9" r="3.4" fill="#1d4216"/>
<circle cx="650.9" cy="224.3" r="3.2" fill="#1a3c12"/>
<circle cx="653.6" cy="222.3" r="2.8" fill="#224618"/>
<circle cx="657.2" cy="223.0" r="3.0" fill="#254d1c"/>
<circle cx="662.1" cy="223.0" r="3.1" fill="#2e5a23"/>
<circle cx="663.7" cy="224.2" r="2.8" fill="#1d4216"/>
<circle cx="667.7" cy="224.3" r="3.3" fill="#1a3c12"/>
<circle cx="669.9" cy="222.9" r="2.3" fill="#2e5a23"/>
<circle cx="674.2" cy="222.8" r="2.7" fill="#2a5520"/>
<circle cx="676.7" cy="223.3" r="2.7" fill="#2a5520"/>
<circle cx="680.8" cy="222.5" r="2.3" fill="#2a5520"/>
<circle cx="684.3" cy="222.1" r="2.7" fill="#254d1c"/>
<circle cx="688.4" cy="222.6" r="3.3" fill="#1a3c12"/>
<circle cx="689.3" cy="222.9" r="2.9" fill="#2e5a23"/>
<circle cx="692.7" cy="223.4" r="2.1" fill="#2a5520"/>
<circle cx="696.3" cy="222.8" r="2.2" fill="#2e5a23"/>
<circle cx="628.8" cy="227.1" r="1.5" fill="#254d1c"/>
<circle cx="631.4" cy="227.0" r="1.5" fill="#2e5a23"/>
<circle cx="634.1" cy="226.6" r="2.3" fill="#254d1c"/>
<circle cx="636.8" cy="226.3" r="3.1" fill="#2a5520"/>
<circle cx="641.9" cy="227.3" r="3.1" fill="#1a3c12"/>
<circle cx="644.0" cy="226.7" r="3.0" fill="#1d4216"/>
<circle cx="648.8" cy="226.6" r="3.2" fill="#1a3c12"/>
<circle cx="650.5" cy="227.6" r="2.3" fill="#2e5a23"/>
<circle cx="653.5" cy="226.2" r="3.1" fill="#2e5a23"/>
<circle cx="658.0" cy="227.3" r="2.7" fill="#224618"/>
<circle cx="660.8" cy="226.1" r="2.4" fill="#224618"/>
<circle cx="663.8" cy="225.6" r="2.7" fill="#224618"/>
<circle cx="666.8" cy="225.5" r="2.4" fill="#2a5520"/>
<circle cx="671.3" cy="225.8" r="2.4" fill="#254d1c"/>
<circle cx="673.8" cy="225.8" r="2.3" fill="#1a3c12"/>
<circle cx="677.4" cy="226.4" r="2.7" fill="#2e5a23"/>
<circle cx="681.5" cy="227.2" r="2.3" fill="#254d1c"/>
<circle cx="683.6" cy="227.2" r="2.4" fill="#2a5520"/>
<circle cx="687.1" cy="227.7" r="2.5" fill="#1a3c12"/>
<circle cx="691.3" cy="227.5" r="3.2" fill="#1d4216"/>
<circle cx="694.3" cy="227.7" r="1.7" fill="#2a5520"/>
<circle cx="697.3" cy="225.4" r="2.1" fill="#224618"/>
<circle cx="628.2" cy="230.2" r="1.9" fill="#224618"/>
<circle cx="632.9" cy="229.9" r="1.6" fill="#224618"/>
<circle cx="636.4" cy="229.8" r="3.0" fill="#1a3c12"/>
<circle cx="640.1" cy="229.9" r="2.7" fill="#2e5a23"/>
<circle cx="642.8" cy="229.9" r="2.3" fill="#224618"/>
<circle cx="645.8" cy="229.4" r="2.4" fill="#1d4216"/>
<circle cx="650.3" cy="229.1" r="2.8" fill="#2a5520"/>
<circle cx="653.2" cy="229.5" r="3.1" fill="#2e5a23"/>
<circle cx="655.7" cy="230.8" r="2.4" fill="#1a3c12"/>
<circle cx="658.3" cy="229.1" r="3.3" fill="#254d1c"/>
<circle cx="663.4" cy="230.6" r="2.9" fill="#2a5520"/>
<circle cx="664.9" cy="230.8" r="3.1" fill="#2a5520"/>
<circle cx="669.3" cy="229.5" r="2.5" fill="#1d4216"/>
<circle cx="673.5" cy="229.2" r="2.6" fill="#224618"/>
<circle cx="675.3" cy="229.0" r="2.8" fill="#1a3c12"/>
<circle cx="680.2" cy="228.9" r="2.8" fill="#1d4216"/>
<circle cx="683.3" cy="230.0" r="3.3" fill="#254d1c"/>
<circle cx="686.7" cy="229.1" r="2.7" fill="#2a5520"/>
<circle cx="690.4" cy="229.2" r="2.6" fill="#1a3c12"/>
<circle cx="691.8" cy="229.6" r="2.1" fill="#1a3c12"/>
<circle cx="694.9" cy="231.1" r="2.1" fill="#224618"/>
<circle cx="632.3" cy="233.3" r="1.8" fill="#2a5520"/>
<circle cx="635.0" cy="234.0" r="2.1" fill="#254d1c"/>
<circle cx="638.3" cy="232.4" r="2.4" fill="#224618"/>
<circle cx="641.3" cy="232.1" r="2.6" fill="#2a5520"/>
<circle cx="645.5" cy="233.5" r="2.7" fill="#254d1c"/>
<circle cx="646.5" cy="232.2" r="2.5" fill="#224618"/>
<circle cx="650.7" cy="232.7" r="2.7" fill="#254d1c"/>
<circle cx="653.3" cy="232.6" r="2.7" fill="#2e5a23"/>
<circle cx="657.4" cy="233.1" r="2.9" fill="#1d4216"/>
<circle cx="668.0" cy="233.1" r="3.3" fill="#1a3c12"/>
<circle cx="670.1" cy="233.0" r="2.5" fill="#224618"/>
<circle cx="673.1" cy="233.0" r="2.6" fill="#1a3c12"/>
<circle cx="677.9" cy="232.6" r="3.0" fill="#1d4216"/>
<circle cx="681.2" cy="232.6" r="2.8" fill="#254d1c"/>
<circle cx="684.3" cy="234.1" r="2.7" fill="#2a5520"/>
<circle cx="687.0" cy="234.0" r="3.2" fill="#2e5a23"/>
<circle cx="689.8" cy="233.6" r="1.7" fill="#2a5520"/>
<circle cx="692.9" cy="232.1" r="2.1" fill="#1d4216"/>
<circle cx="633.5" cy="235.7" r="1.7" fill="#2e5a23"/>
<circle cx="635.9" cy="236.9" r="2.4" fill="#1d4216"/>
<circle cx="640.8" cy="236.2" r="3.2" fill="#224618"/>
<circle cx="643.0" cy="235.6" r="2.4" fill="#1a3c12"/>
<circle cx="646.6" cy="237.2" r="3.3" fill="#2e5a23"/>
<circle cx="650.7" cy="235.8" r="2.7" fill="#254d1c"/>
<circle cx="652.8" cy="235.5" r="3.2" fill="#1d4216"/>
<circle cx="673.1" cy="235.5" r="3.4" fill="#2e5a23"/>
<circle cx="674.8" cy="236.7" r="2.4" fill="#1d4216"/>
<circle cx="679.0" cy="236.0" r="2.7" fill="#254d1c"/>
<circle cx="681.7" cy="236.3" r="2.4" fill="#254d1c"/>
<circle cx="685.8" cy="235.7" r="2.4" fill="#254d1c"/>
<circle cx="689.7" cy="235.6" r="1.6" fill="#2e5a23"/>
<circle cx="636.6" cy="238.6" r="2.2" fill="#224618"/>
<circle cx="640.6" cy="239.5" r="2.1" fill="#1a3c12"/>
<circle cx="642.3" cy="239.3" r="3.4" fill="#224618"/>
<circle cx="647.1" cy="240.5" r="2.7" fill="#2a5520"/>
<circle cx="648.7" cy="239.2" r="2.4" fill="#1a3c12"/>
<circle cx="652.5" cy="239.8" r="3.0" fill="#2e5a23"/>
<circle cx="641.3" cy="243.7" r="1.6" fill="#2a5520"/>
<circle cx="644.8" cy="243.8" r="2.1" fill="#2a5520"/>
<circle cx="647.6" cy="242.6" r="1.6" fill="#254d1c"/>
<circle cx="651.9" cy="242.7" r="2.2" fill="#2a5520"/>
<circle cx="626.5" cy="217.6" r="1.5" fill="#2a5520"/>
<circle cx="699.2" cy="205.4" r="1.2" fill="#224618"/>
<circle cx="626.4" cy="229.8" r="1.0" fill="#1a3c12"/>
<circle cx="698.6" cy="210.8" r="1.2" fill="#2a5520"/>
<circle cx="699.5" cy="204.0" r="1.1" fill="#2f5e25"/>
<circle cx="676.2" cy="165.1" r="0.8" fill="#2e5a23"/>
<circle cx="636.1" cy="243.0" r="1.0" fill="#2f5e25"/>
<circle cx="628.1" cy="234.5" r="1.5" fill="#2f5e25"/>
<circle cx="700.0" cy="224.4" r="1.2" fill="#224618"/>
<circle cx="625.1" cy="215.0" r="1.5" fill="#224618"/>
<circle cx="700.8" cy="222.4" r="1.1" fill="#1a3c12"/>
<circle cx="652.1" cy="159.7" r="1.7" fill="#254d1c"/>
<circle cx="636.2" cy="181.5" r="1.4" fill="#254d1c"/>
<circle cx="682.6" cy="171.2" r="1.7" fill="#1d4216"/>
<circle cx="639.9" cy="243.5" r="1.2" fill="#2a5520"/>
<circle cx="699.1" cy="203.0" r="1.7" fill="#254d1c"/>
<circle cx="695.7" cy="192.5" r="1.5" fill="#1d4216"/>
<circle cx="627.2" cy="206.0" r="1.1" fill="#224618"/>
<circle cx="686.4" cy="173.5" r="1.8" fill="#2a5520"/>
<circle cx="628.1" cy="234.8" r="1.6" fill="#224618"/>
<circle cx="635.0" cy="242.0" r="1.0" fill="#1d4216"/>
<circle cx="677.0" cy="163.0" r="1.8" fill="#1d4216"/>
<circle cx="627.3" cy="192.2" r="1.5" fill="#2f5e25"/>
<circle cx="629.6" cy="233.7" r="0.9" fill="#1a3c12"/>
<circle cx="645.0" cy="246.0" r="1.1" fill="#224618"/>
<circle cx="629.7" cy="190.1" r="1.4" fill="#2f5e25"/>
<circle cx="700.4" cy="221.8" r="1.0" fill="#35652a"/>
<circle cx="644.6" cy="169.3" r="1.3" fill="#1a3c12"/>
<circle cx="699.7" cy="227.6" r="1.5" fill="#2e5a23"/>
<circle cx="700.1" cy="209.6" r="0.8" fill="#2e5a23"/>
<circle cx="685.8" cy="174.8" r="1.5" fill="#1a3c12"/>
<circle cx="624.8" cy="217.1" r="0.9" fill="#2f5e25"/>
<circle cx="640.2" cy="175.9" r="1.4" fill="#2a5520"/>
<circle cx="693.4" cy="188.0" r="0.9" fill="#35652a"/>
<circle cx="628.9" cy="198.1" r="0.8" fill="#254d1c"/>
<circle cx="629.5" cy="193.2" r="1.0" fill="#3c6e2c"/>
<circle cx="623.4" cy="219.8" r="1.5" fill="#3c6e2c"/>
<circle cx="629.0" cy="187.7" r="0.9" fill="#254d1c"/>
<circle cx="643.8" cy="170.0" r="1.3" fill="#3c6e2c"/>
<circle cx="702.3" cy="225.6" r="0.9" fill="#1a3c12"/>
<circle cx="667.6" cy="154.1" r="1.7" fill="#2f5e25"/>
<circle cx="682.9" cy="170.3" r="0.9" fill="#3c6e2c"/>
<circle cx="699.9" cy="228.5" r="1.8" fill="#3c6e2c"/>
<circle cx="628.8" cy="197.1" r="1.3" fill="#1d4216"/>
<circle cx="697.3" cy="194.6" r="1.1" fill="#1d4216"/>
<circle cx="642.3" cy="169.1" r="0.8" fill="#35652a"/>
<circle cx="700.4" cy="229.1" r="0.9" fill="#1d4216"/>
<circle cx="644.2" cy="170.0" r="1.8" fill="#224618"/>
<circle cx="688.3" cy="177.5" r="1.1" fill="#224618"/>
<circle cx="643.1" cy="168.5" r="1.4" fill="#35652a"/>
<circle cx="696.2" cy="193.7" r="1.7" fill="#3c6e2c"/>
<circle cx="639.5" cy="174.9" r="1.4" fill="#2e5a23"/>
<circle cx="699.8" cy="225.9" r="1.4" fill="#2a5520"/>
<circle cx="699.7" cy="219.8" r="0.9" fill="#1d4216"/>
<circle cx="631.8" cy="185.8" r="1.7" fill="#2f5e25"/>
<circle cx="624.5" cy="214.9" r="1.2" fill="#3c6e2c"/>
<circle cx="698.0" cy="207.6" r="1.1" fill="#3c6e2c"/>
<circle cx="651.9" cy="158.4" r="1.1" fill="#3c6e2c"/>
<circle cx="671.3" cy="157.3" r="1.0" fill="#35652a"/>
<circle cx="699.0" cy="229.0" r="1.4" fill="#254d1c"/>
<circle cx="626.7" cy="193.4" r="1.3" fill="#3c6e2c"/>
<circle cx="680.6" cy="167.0" r="1.3" fill="#224618"/>
<circle cx="634.4" cy="241.3" r="1.2" fill="#2e5a23"/>
<circle cx="644.8" cy="246.3" r="1.6" fill="#2e5a23"/>
<circle cx="627.1" cy="230.1" r="1.3" fill="#1a3c12"/>
<circle cx="654.1" cy="156.7" r="1.5" fill="#3c6e2c"/>
<circle cx="646.3" cy="246.1" r="1.8" fill="#35652a"/>
<circle cx="633.9" cy="182.3" r="1.6" fill="#2e5a23"/>
<circle cx="658.4" cy="154.7" r="1.8" fill="#1a3c12"/>
<circle cx="624.3" cy="215.2" r="1.3" fill="#224618"/>
<circle cx="629.2" cy="197.3" r="1.1" fill="#254d1c"/>
<circle cx="631.5" cy="184.2" r="1.1" fill="#2e5a23"/>
<circle cx="642.3" cy="244.8" r="1.1" fill="#2f5e25"/>
<circle cx="655.7" cy="157.3" r="1.7" fill="#224618"/>
<circle cx="686.0" cy="175.6" r="1.1" fill="#224618"/>
<circle cx="689.0" cy="180.8" r="1.7" fill="#3c6e2c"/>
<circle cx="635.2" cy="240.4" r="1.2" fill="#35652a"/>
<circle cx="666.6" cy="224.9" r="1.8" fill="#4f742e" opacity="0.85"/>
<circle cx="656.9" cy="207.4" r="0.8" fill="#2f5e25" opacity="0.85"/>
<circle cx="630.3" cy="224.3" r="1.4" fill="#4f742e" opacity="0.85"/>
<circle cx="668.8" cy="227.8" r="1.0" fill="#35652a" opacity="0.85"/>
<circle cx="659.5" cy="219.3" r="0.8" fill="#3a682a" opacity="0.85"/>
<circle cx="652.4" cy="173.0" r="1.4" fill="#35652a" opacity="0.85"/>
<circle cx="672.4" cy="179.1" r="0.9" fill="#2b5722" opacity="0.85"/>
<circle cx="682.0" cy="199.8" r="1.7" fill="#447430" opacity="0.85"/>
<circle cx="670.9" cy="216.2" r="1.6" fill="#2f5e25" opacity="0.85"/>
<circle cx="665.9" cy="176.8" r="1.2" fill="#2b5722" opacity="0.85"/>
<circle cx="671.2" cy="221.1" r="1.0" fill="#3a682a" opacity="0.85"/>
<circle cx="647.4" cy="183.1" r="1.3" fill="#2b5722" opacity="0.85"/>
<circle cx="689.5" cy="221.9" r="0.7" fill="#3c6e2c" opacity="0.85"/>
<circle cx="658.9" cy="219.3" r="1.2" fill="#3a682a" opacity="0.85"/>
<circle cx="643.5" cy="193.5" r="1.7" fill="#3c6e2c" opacity="0.85"/>
<circle cx="660.8" cy="197.1" r="1.2" fill="#2b5722" opacity="0.85"/>
<circle cx="662.9" cy="217.4" r="1.8" fill="#3c6e2c" opacity="0.85"/>
<circle cx="647.8" cy="223.1" r="1.8" fill="#3a682a" opacity="0.85"/>
<circle cx="672.7" cy="193.9" r="1.6" fill="#6b6a2e" opacity="0.85"/>
<circle cx="678.7" cy="208.6" r="1.2" fill="#2b5722" opacity="0.85"/>
<circle cx="658.2" cy="185.3" r="1.2" fill="#2b5722" opacity="0.85"/>
<circle cx="687.2" cy="182.5" r="1.2" fill="#3a682a" opacity="0.85"/>
<circle cx="685.4" cy="208.8" r="1.2" fill="#5f7632" opacity="0.85"/>
<circle cx="668.3" cy="222.7" r="1.5" fill="#6b6a2e" opacity="0.85"/>
<circle cx="640.2" cy="191.0" r="1.6" fill="#5f7632" opacity="0.85"/>
<circle cx="663.2" cy="228.0" r="1.6" fill="#5f7632" opacity="0.85"/>
<circle cx="662.3" cy="202.4" r="1.5" fill="#3a682a" opacity="0.85"/>
<circle cx="647.4" cy="216.1" r="1.2" fill="#2f5e25" opacity="0.85"/>
<circle cx="650.7" cy="163.3" r="1.4" fill="#3a682a" opacity="0.85"/>
<circle cx="694.6" cy="206.5" r="1.6" fill="#3c6e2c" opacity="0.85"/>
<circle cx="663.0" cy="154.5" r="1.1" fill="#447430" opacity="0.85"/>
<circle cx="648.2" cy="189.1" r="1.3" fill="#35652a" opacity="0.85"/>
<circle cx="655.5" cy="203.9" r="1.6" fill="#447430" opacity="0.85"/>
<circle cx="642.3" cy="174.2" r="1.5" fill="#35652a" opacity="0.85"/>
<circle cx="645.5" cy="222.4" r="1.5" fill="#35652a" opacity="0.85"/>
<circle cx="647.6" cy="215.4" r="1.4" fill="#5f7632" opacity="0.85"/>
<circle cx="650.8" cy="219.6" r="1.0" fill="#3a682a" opacity="0.85"/>
<circle cx="628.5" cy="219.8" r="1.6" fill="#4f742e" opacity="0.85"/>
<circle cx="697.4" cy="210.0" r="1.0" fill="#5f7632" opacity="0.85"/>
<circle cx="678.6" cy="167.9" r="1.2" fill="#2b5722" opacity="0.85"/>
<circle cx="650.3" cy="170.7" r="1.6" fill="#3a682a" opacity="0.85"/>
<circle cx="675.1" cy="186.5" r="1.8" fill="#447430" opacity="0.85"/>
<circle cx="632.8" cy="198.5" r="1.5" fill="#3c6e2c" opacity="0.85"/>
<circle cx="675.7" cy="225.9" r="0.7" fill="#5f7632" opacity="0.85"/>
<circle cx="660.0" cy="159.4" r="1.4" fill="#2b5722" opacity="0.85"/>
<circle cx="654.4" cy="159.2" r="1.5" fill="#2f5e25" opacity="0.85"/>
<circle cx="630.7" cy="204.7" r="1.5" fill="#35652a" opacity="0.85"/>
<circle cx="648.4" cy="197.6" r="1.1" fill="#5f7632" opacity="0.85"/>
<circle cx="666.2" cy="154.3" r="0.7" fill="#5f7632" opacity="0.85"/>
<circle cx="667.7" cy="182.5" r="0.8" fill="#3c6e2c" opacity="0.85"/>
<circle cx="663.4" cy="197.2" r="1.8" fill="#3a682a" opacity="0.85"/>
<circle cx="662.6" cy="218.0" r="1.2" fill="#6b6a2e" opacity="0.85"/>
<circle cx="659.8" cy="179.0" r="1.9" fill="#447430" opacity="0.85"/>
<circle cx="652.0" cy="180.4" r="1.5" fill="#35652a" opacity="0.85"/>
<circle cx="647.3" cy="210.9" r="1.7" fill="#6b6a2e" opacity="0.85"/>
<circle cx="676.4" cy="217.8" r="1.2" fill="#2b5722" opacity="0.85"/>
<circle cx="643.9" cy="200.7" r="1.5" fill="#447430" opacity="0.85"/>
<circle cx="656.9" cy="162.2" r="1.4" fill="#6b6a2e" opacity="0.85"/>
<circle cx="630.3" cy="205.2" r="1.1" fill="#3c6e2c" opacity="0.85"/>
<circle cx="635.8" cy="204.1" r="1.7" fill="#3c6e2c" opacity="0.85"/>
<circle cx="695.2" cy="196.4" r="1.4" fill="#6b6a2e" opacity="0.85"/>
<circle cx="668.5" cy="208.3" r="1.3" fill="#447430" opacity="0.85"/>
<circle cx="642.2" cy="216.4" r="1.4" fill="#5f7632" opacity="0.85"/>
<circle cx="644.2" cy="209.6" r="0.9" fill="#6b6a2e" opacity="0.85"/>
<circle cx="695.5" cy="201.9" r="0.9" fill="#447430" opacity="0.85"/>
<circle cx="630.4" cy="223.3" r="1.7" fill="#2f5e25" opacity="0.85"/>
<circle cx="672.4" cy="227.7" r="1.8" fill="#5f7632" opacity="0.85"/>
<circle cx="691.6" cy="229.0" r="1.1" fill="#3c6e2c" opacity="0.85"/>
<circle cx="693.7" cy="210.1" r="1.4" fill="#2b5722" opacity="0.85"/>
<circle cx="672.7" cy="235.1" r="1.5" fill="#2b5722" opacity="0.85"/>
<circle cx="694.5" cy="199.5" r="1.0" fill="#447430" opacity="0.85"/>
<circle cx="631.3" cy="215.9" r="1.0" fill="#4f742e" opacity="0.85"/>
<circle cx="652.8" cy="239.5" r="1.2" fill="#2b5722" opacity="0.85"/>
<circle cx="655.2" cy="164.9" r="1.1" fill="#5f7632" opacity="0.85"/>
<circle cx="654.8" cy="206.6" r="1.5" fill="#2f5e25" opacity="0.85"/>
<circle cx="641.9" cy="173.5" r="1.5" fill="#447430" opacity="0.85"/>
<circle cx="661.6" cy="194.8" r="1.4" fill="#35652a" opacity="0.85"/>
<circle cx="659.0" cy="165.8" r="1.2" fill="#2b5722" opacity="0.85"/>
<circle cx="681.6" cy="223.5" r="0.8" fill="#3c6e2c" opacity="0.85"/>
<circle cx="651.1" cy="167.1" r="0.7" fill="#2b5722" opacity="0.85"/>
<circle cx="669.8" cy="167.0" r="1.1" fill="#35652a" opacity="0.85"/>
<circle cx="643.4" cy="208.3" r="1.2" fill="#2b5722" opacity="0.85"/>
<circle cx="668.5" cy="172.2" r="0.9" fill="#6b6a2e" opacity="0.85"/>
<circle cx="656.0" cy="227.1" r="1.6" fill="#3c6e2c" opacity="0.85"/>
<circle cx="660.9" cy="189.2" r="1.4" fill="#447430" opacity="0.85"/>
<circle cx="694.0" cy="228.5" r="1.6" fill="#2b5722" opacity="0.85"/>
<circle cx="651.3" cy="181.4" r="0.9" fill="#5f7632" opacity="0.85"/>
<circle cx="640.3" cy="239.9" r="1.0" fill="#4f742e" opacity="0.85"/>
<circle cx="675.9" cy="181.9" r="1.5" fill="#2f5e25" opacity="0.85"/>
<circle cx="688.7" cy="211.9" r="1.0" fill="#6b6a2e" opacity="0.85"/>
<circle cx="662.4" cy="177.5" r="1.6" fill="#35652a" opacity="0.85"/>
<circle cx="667.8" cy="193.8" r="1.8" fill="#2b5722" opacity="0.85"/>
<circle cx="660.5" cy="172.7" r="1.9" fill="#4f742e" opacity="0.85"/>
<circle cx="662.8" cy="171.8" r="1.4" fill="#4f742e" opacity="0.85"/>
<circle cx="665.0" cy="172.4" r="0.7" fill="#35652a" opacity="0.85"/>
<circle cx="671.8" cy="218.0" r="1.3" fill="#6b6a2e" opacity="0.85"/>
<circle cx="631.4" cy="213.6" r="1.0" fill="#3a682a" opacity="0.85"/>
<circle cx="661.2" cy="170.7" r="1.5" fill="#4f742e" opacity="0.85"/>
<circle cx="656.8" cy="183.3" r="1.6" fill="#3a682a" opacity="0.85"/>
<circle cx="670.9" cy="204.8" r="1.5" fill="#447430" opacity="0.85"/>
<circle cx="665.6" cy="166.3" r="1.2" fill="#2f5e25" opacity="0.85"/>
<circle cx="641.3" cy="205.0" r="1.1" fill="#35652a" opacity="0.85"/>
<circle cx="689.6" cy="187.7" r="1.5" fill="#4f742e" opacity="0.85"/>
<circle cx="666.0" cy="218.1" r="1.1" fill="#3c6e2c" opacity="0.85"/>
<circle cx="665.5" cy="159.6" r="0.8" fill="#2f5e25" opacity="0.85"/>
<circle cx="639.7" cy="232.6" r="0.8" fill="#5f7632" opacity="0.85"/>
<circle cx="668.3" cy="206.2" r="1.5" fill="#5f7632" opacity="0.85"/>
<circle cx="677.0" cy="181.1" r="1.3" fill="#35652a" opacity="0.85"/>
<circle cx="686.0" cy="195.0" r="1.8" fill="#2f5e25" opacity="0.85"/>
<circle cx="632.3" cy="200.7" r="1.4" fill="#3c6e2c" opacity="0.85"/>
<circle cx="648.1" cy="194.0" r="1.5" fill="#2b5722" opacity="0.85"/>
<circle cx="688.2" cy="216.4" r="0.8" fill="#2b5722" opacity="0.85"/>
<circle cx="694.7" cy="204.4" r="1.2" fill="#2b5722" opacity="0.85"/>
<circle cx="655.5" cy="162.7" r="1.5" fill="#4f742e" opacity="0.85"/>
<circle cx="686.8" cy="187.7" r="0.7" fill="#2f5e25" opacity="0.85"/>
<circle cx="637.7" cy="198.1" r="1.8" fill="#3c6e2c" opacity="0.85"/>
<circle cx="638.3" cy="206.2" r="0.9" fill="#35652a" opacity="0.85"/>
<circle cx="639.3" cy="180.7" r="1.2" fill="#3c6e2c" opacity="0.85"/>
<circle cx="649.6" cy="164.7" r="1.3" fill="#447430" opacity="0.85"/>
<circle cx="691.3" cy="230.1" r="1.3" fill="#4f742e" opacity="0.85"/>
<circle cx="645.5" cy="239.1" r="0.8" fill="#2f5e25" opacity="0.85"/>
<circle cx="644.0" cy="230.3" r="1.3" fill="#6b6a2e" opacity="0.85"/>
<circle cx="646.0" cy="234.2" r="1.1" fill="#2f5e25" opacity="0.85"/>
<circle cx="645.7" cy="208.7" r="1.5" fill="#447430" opacity="0.85"/>
<circle cx="637.0" cy="196.3" r="0.9" fill="#2b5722" opacity="0.85"/>
<circle cx="672.4" cy="199.8" r="1.1" fill="#2f5e25" opacity="0.85"/>
<circle cx="667.4" cy="174.6" r="0.8" fill="#6b6a2e" opacity="0.85"/>
<circle cx="670.7" cy="210.0" r="1.4" fill="#2b5722" opacity="0.85"/>
<circle cx="672.3" cy="191.6" r="1.2" fill="#5f7632" opacity="0.85"/>
<circle cx="655.0" cy="165.7" r="1.4" fill="#4f742e" opacity="0.85"/>
<circle cx="675.4" cy="228.7" r="1.2" fill="#35652a" opacity="0.85"/>
<circle cx="653.7" cy="176.7" r="1.7" fill="#4f742e" opacity="0.85"/>
<circle cx="672.3" cy="209.3" r="1.9" fill="#6b6a2e" opacity="0.85"/>
<circle cx="636.3" cy="236.1" r="1.6" fill="#447430" opacity="0.85"/>
<circle cx="651.5" cy="163.5" r="1.8" fill="#4f742e" opacity="0.85"/>
<circle cx="684.3" cy="212.9" r="0.9" fill="#3c6e2c" opacity="0.85"/>
<circle cx="635.2" cy="193.5" r="1.4" fill="#447430" opacity="0.85"/>
<circle cx="669.2" cy="195.8" r="0.7" fill="#2b5722" opacity="0.85"/>
<circle cx="646.6" cy="194.0" r="1.4" fill="#3c6e2c" opacity="0.85"/>
<circle cx="672.0" cy="165.2" r="1.4" fill="#3c6e2c" opacity="0.85"/>
<circle cx="640.6" cy="201.0" r="1.1" fill="#5f7632" opacity="0.85"/>
<circle cx="690.7" cy="208.5" r="1.6" fill="#35652a" opacity="0.85"/>
<circle cx="681.3" cy="198.3" r="0.9" fill="#6b6a2e" opacity="0.85"/>
<circle cx="682.6" cy="235.1" r="1.8" fill="#3a682a" opacity="0.85"/>
<circle cx="653.6" cy="162.0" r="0.9" fill="#4f742e" opacity="0.85"/>
<circle cx="652.3" cy="164.2" r="1.4" fill="#5f7632" opacity="0.85"/>
<circle cx="658.1" cy="163.8" r="1.3" fill="#2b5722" opacity="0.85"/>
<circle cx="672.4" cy="162.1" r="1.0" fill="#2f5e25" opacity="0.85"/>
<circle cx="663.9" cy="191.8" r="1.3" fill="#4f742e" opacity="0.85"/>
<circle cx="661.9" cy="160.0" r="1.4" fill="#6b6a2e" opacity="0.85"/>
<circle cx="661.9" cy="205.0" r="1.0" fill="#2b5722" opacity="0.85"/>
<circle cx="660.9" cy="212.4" r="1.2" fill="#3a682a" opacity="0.85"/>
<circle cx="646.8" cy="240.0" r="0.9" fill="#447430" opacity="0.85"/>
<circle cx="638.1" cy="237.3" r="1.7" fill="#5f7632" opacity="0.85"/>
<circle cx="657.2" cy="163.4" r="1.3" fill="#5f7632" opacity="0.85"/>
<circle cx="659.7" cy="194.6" r="1.1" fill="#3a682a" opacity="0.85"/>
<circle cx="693.5" cy="201.7" r="1.9" fill="#2f5e25" opacity="0.85"/>
<circle cx="663.5" cy="168.7" r="1.8" fill="#6b6a2e" opacity="0.85"/>
<circle cx="660.9" cy="162.6" r="1.7" fill="#35652a" opacity="0.85"/>
<circle cx="656.1" cy="161.1" r="1.6" fill="#35652a" opacity="0.85"/>
<circle cx="686.7" cy="208.5" r="0.9" fill="#3c6e2c" opacity="0.85"/>
<circle cx="659.3" cy="186.3" r="0.9" fill="#3c6e2c" opacity="0.85"/>
<circle cx="657.5" cy="172.7" r="0.8" fill="#4f742e" opacity="0.85"/>
<circle cx="662.4" cy="157.6" r="0.8" fill="#4f742e" opacity="0.85"/>
<circle cx="638.7" cy="240.0" r="1.1" fill="#6b6a2e" opacity="0.85"/>
<circle cx="644.8" cy="241.8" r="0.9" fill="#447430" opacity="0.85"/>
<circle cx="656.7" cy="165.4" r="1.7" fill="#5f7632" opacity="0.85"/>
<circle cx="679.4" cy="173.9" r="1.3" fill="#35652a" opacity="0.85"/>
<circle cx="684.7" cy="182.2" r="1.2" fill="#3c6e2c" opacity="0.85"/>
<circle cx="685.4" cy="208.3" r="1.0" fill="#5f7632" opacity="0.85"/>
<circle cx="662.6" cy="195.2" r="1.1" fill="#4f742e" opacity="0.85"/>
<circle cx="655.6" cy="204.8" r="1.0" fill="#35652a" opacity="0.85"/>
<circle cx="632.2" cy="196.6" r="1.7" fill="#3c6e2c" opacity="0.85"/>
<circle cx="640.0" cy="178.8" r="1.1" fill="#3c6e2c" opacity="0.85"/>
<circle cx="676.7" cy="176.5" r="1.6" fill="#35652a" opacity="0.85"/>
<circle cx="659.2" cy="187.6" r="0.7" fill="#3c6e2c" opacity="0.85"/>
<circle cx="684.3" cy="191.7" r="0.8" fill="#2b5722" opacity="0.85"/>
<circle cx="662.8" cy="224.2" r="1.7" fill="#2f5e25" opacity="0.85"/>
<circle cx="659.8" cy="216.5" r="1.4" fill="#6b6a2e" opacity="0.85"/>
<circle cx="696.2" cy="202.7" r="1.7" fill="#6b6a2e" opacity="0.85"/>
<circle cx="691.7" cy="208.6" r="1.3" fill="#2b5722" opacity="0.85"/>
<circle cx="663.4" cy="155.8" r="1.0" fill="#3a682a" opacity="0.85"/>
<circle cx="666.4" cy="165.4" r="1.2" fill="#5f7632" opacity="0.85"/>
<circle cx="673.1" cy="175.8" r="1.6" fill="#4f742e" opacity="0.85"/>
<circle cx="661.3" cy="161.0" r="0.9" fill="#2b5722" opacity="0.85"/>
<circle cx="642.0" cy="240.4" r="1.0" fill="#6b6a2e" opacity="0.85"/>
<circle cx="657.9" cy="164.3" r="1.3" fill="#2b5722" opacity="0.85"/>
<circle cx="656.6" cy="165.7" r="1.6" fill="#6b6a2e" opacity="0.85"/>
<circle cx="651.0" cy="175.3" r="1.5" fill="#5f7632" opacity="0.85"/>
<circle cx="647.8" cy="215.2" r="0.9" fill="#447430" opacity="0.85"/>
<circle cx="676.1" cy="177.5" r="1.0" fill="#3c6e2c" opacity="0.85"/>
<circle cx="647.9" cy="196.1" r="1.4" fill="#2f5e25" opacity="0.85"/>
<circle cx="682.0" cy="223.2" r="1.0" fill="#6b6a2e" opacity="0.85"/>
<circle cx="676.9" cy="210.4" r="0.9" fill="#4f742e" opacity="0.85"/>
<circle cx="649.8" cy="243.3" r="1.9" fill="#35652a" opacity="0.85"/>
<circle cx="690.6" cy="236.2" r="0.8" fill="#2b5722" opacity="0.85"/>
<circle cx="667.3" cy="160.0" r="1.8" fill="#3a682a" opacity="0.85"/>
<circle cx="642.4" cy="232.7" r="1.2" fill="#35652a" opacity="0.85"/>
<circle cx="631.6" cy="214.1" r="1.6" fill="#2b5722" opacity="0.85"/>
<circle cx="642.8" cy="196.9" r="1.5" fill="#6b6a2e" opacity="0.85"/>
<circle cx="637.7" cy="221.3" r="1.8" fill="#447430" opacity="0.85"/>
<circle cx="677.8" cy="167.7" r="1.4" fill="#2f5e25" opacity="0.85"/>
<circle cx="628.1" cy="217.5" r="1.4" fill="#4f742e" opacity="0.85"/>
<circle cx="652.2" cy="210.6" r="0.8" fill="#35652a" opacity="0.85"/>
<circle cx="666.0" cy="231.7" r="1.3" fill="#3a682a" opacity="0.85"/>
<circle cx="695.7" cy="229.4" r="1.9" fill="#3a682a" opacity="0.85"/>
<circle cx="670.0" cy="226.1" r="0.9" fill="#5f7632" opacity="0.85"/>
<circle cx="632.1" cy="188.5" r="1.4" fill="#3a682a" opacity="0.85"/>
<circle cx="687.7" cy="209.6" r="1.9" fill="#3a682a" opacity="0.85"/>
<circle cx="664.0" cy="159.6" r="0.8" fill="#3c6e2c" opacity="0.85"/>
<circle cx="679.9" cy="207.9" r="0.8" fill="#6b6a2e" opacity="0.85"/>
<circle cx="682.5" cy="193.0" r="1.9" fill="#447430" opacity="0.85"/>
<circle cx="648.5" cy="207.1" r="1.3" fill="#2b5722" opacity="0.85"/>
<circle cx="649.5" cy="236.9" r="1.3" fill="#4f742e" opacity="0.85"/>
<circle cx="652.3" cy="218.5" r="1.8" fill="#2f5e25" opacity="0.85"/>
<circle cx="678.5" cy="233.3" r="0.9" fill="#3c6e2c" opacity="0.85"/>
<circle cx="696.2" cy="232.3" r="0.9" fill="#3c6e2c" opacity="0.85"/>
<circle cx="670.1" cy="211.2" r="1.9" fill="#6b6a2e" opacity="0.85"/>
<circle cx="641.8" cy="243.1" r="1.7" fill="#35652a" opacity="0.85"/>
<circle cx="648.8" cy="177.9" r="1.4" fill="#5f7632" opacity="0.85"/>
<circle cx="694.9" cy="232.6" r="1.0" fill="#4f742e" opacity="0.85"/>
<circle cx="653.8" cy="237.7" r="1.7" fill="#3a682a" opacity="0.85"/>
<circle cx="674.5" cy="162.8" r="1.6" fill="#6b6a2e" opacity="0.85"/>
<circle cx="685.7" cy="207.5" r="1.7" fill="#3a682a" opacity="0.85"/>
<circle cx="662.3" cy="155.8" r="1.1" fill="#2f5e25" opacity="0.85"/>
<circle cx="650.3" cy="219.6" r="1.4" fill="#2b5722" opacity="0.85"/>
<circle cx="685.6" cy="202.6" r="1.5" fill="#4f742e" opacity="0.85"/>
<circle cx="678.9" cy="186.3" r="0.9" fill="#35652a" opacity="0.85"/>
<circle cx="651.7" cy="164.6" r="1.6" fill="#3a682a" opacity="0.85"/>
<circle cx="655.7" cy="159.2" r="1.4" fill="#2b5722" opacity="0.85"/>
<circle cx="652.4" cy="241.9" r="1.0" fill="#2f5e25" opacity="0.85"/>
<circle cx="639.5" cy="232.6" r="1.2" fill="#6b6a2e" opacity="0.85"/>
<circle cx="652.9" cy="197.3" r="1.3" fill="#447430" opacity="0.85"/>
<circle cx="643.3" cy="219.4" r="1.7" fill="#447430" opacity="0.85"/>
<circle cx="646.3" cy="177.8" r="1.8" fill="#447430" opacity="0.85"/>
<circle cx="631.4" cy="204.0" r="1.8" fill="#3c6e2c" opacity="0.85"/>
<circle cx="669.5" cy="169.1" r="1.8" fill="#3c6e2c" opacity="0.85"/>
<circle cx="632.7" cy="235.1" r="1.0" fill="#447430" opacity="0.85"/>
<circle cx="663.5" cy="162.4" r="1.2" fill="#4f742e" opacity="0.85"/>
<circle cx="637.7" cy="195.1" r="1.7" fill="#4f742e" opacity="0.85"/>
<circle cx="663.1" cy="154.8" r="1.6" fill="#2f5e25" opacity="0.85"/>
<circle cx="642.6" cy="217.8" r="1.3" fill="#4f742e" opacity="0.85"/>
<circle cx="684.4" cy="175.0" r="1.1" fill="#35652a" opacity="0.85"/>
<circle cx="631.6" cy="203.4" r="1.3" fill="#2b5722" opacity="0.85"/>
<circle cx="641.3" cy="172.8" r="0.8" fill="#3a682a" opacity="0.85"/>
<circle cx="692.5" cy="191.8" r="1.0" fill="#35652a" opacity="0.85"/>
<circle cx="672.8" cy="209.7" r="1.7" fill="#2f5e25" opacity="0.85"/>
<circle cx="659.2" cy="208.1" r="1.3" fill="#2f5e25" opacity="0.85"/>
<circle cx="684.8" cy="217.2" r="1.8" fill="#3a682a" opacity="0.85"/>
<circle cx="683.9" cy="230.2" r="1.1" fill="#35652a" opacity="0.85"/>
<circle cx="659.9" cy="195.3" r="0.9" fill="#4f742e" opacity="0.85"/>
<circle cx="686.8" cy="195.0" r="1.6" fill="#4f742e" opacity="0.85"/>
<circle cx="665.4" cy="183.2" r="1.8" fill="#6b6a2e" opacity="0.85"/>
<circle cx="666.5" cy="211.5" r="1.1" fill="#3c6e2c" opacity="0.85"/>
<circle cx="661.1" cy="223.4" r="0.8" fill="#2b5722" opacity="0.85"/>
<circle cx="658.7" cy="195.6" r="1.6" fill="#2b5722" opacity="0.85"/>
<circle cx="675.2" cy="230.7" r="0.9" fill="#6b6a2e" opacity="0.85"/>
<circle cx="660.9" cy="161.0" r="1.7" fill="#3c6e2c" opacity="0.85"/>
<circle cx="657.1" cy="158.7" r="1.7" fill="#2f5e25" opacity="0.85"/>
<circle cx="645.5" cy="207.9" r="1.4" fill="#2b5722" opacity="0.85"/>
<circle cx="663.4" cy="232.1" r="1.0" fill="#2b5722" opacity="0.85"/>
<circle cx="667.0" cy="157.8" r="0.9" fill="#35652a" opacity="0.85"/>
<circle cx="653.2" cy="186.1" r="0.9" fill="#6b6a2e" opacity="0.85"/>
<circle cx="668.1" cy="179.8" r="1.6" fill="#4f742e" opacity="0.85"/>
<circle cx="685.2" cy="222.3" r="1.4" fill="#2f5e25" opacity="0.85"/>
<circle cx="682.3" cy="222.2" r="1.0" fill="#3c6e2c" opacity="0.85"/>
<circle cx="669.9" cy="162.9" r="1.6" fill="#4f742e" opacity="0.85"/>
<circle cx="678.2" cy="170.8" r="1.5" fill="#2f5e25" opacity="0.85"/>
<circle cx="693.7" cy="210.2" r="1.4" fill="#5f7632" opacity="0.85"/>
<circle cx="665.4" cy="163.2" r="1.9" fill="#2b5722" opacity="0.85"/>
<circle cx="677.2" cy="233.4" r="0.7" fill="#5f7632" opacity="0.85"/>
<circle cx="651.9" cy="165.8" r="1.1" fill="#6b6a2e" opacity="0.85"/>
<circle cx="657.4" cy="158.2" r="1.4" fill="#4f742e" opacity="0.85"/>
<circle cx="660.8" cy="166.5" r="1.8" fill="#4f742e" opacity="0.85"/>
<circle cx="661.3" cy="157.2" r="1.3" fill="#3c6e2c" opacity="0.85"/>
<circle cx="675.8" cy="219.0" r="0.7" fill="#3c6e2c" opacity="0.85"/>
<circle cx="671.1" cy="171.1" r="1.5" fill="#3a682a" opacity="0.85"/>
<circle cx="638.4" cy="197.8" r="1.3" fill="#6b6a2e" opacity="0.85"/>
<circle cx="672.8" cy="174.4" r="1.9" fill="#4f742e" opacity="0.85"/>
<circle cx="681.3" cy="204.5" r="1.1" fill="#2b5722" opacity="0.85"/>
<circle cx="689.2" cy="199.9" r="1.1" fill="#2f5e25" opacity="0.85"/>
<circle cx="639.8" cy="208.7" r="0.7" fill="#dfe8d8" opacity="0.8"/>
<circle cx="683.9" cy="228.8" r="0.6" fill="#dfe8d8" opacity="0.8"/>
<circle cx="692.0" cy="229.7" r="0.7" fill="#dfe8d8" opacity="0.8"/>
<circle cx="672.1" cy="234.3" r="0.7" fill="#dfe8d8" opacity="0.8"/>
<circle cx="649.9" cy="234.8" r="0.9" fill="#dfe8d8" opacity="0.8"/>
<circle cx="635.3" cy="215.7" r="0.7" fill="#dfe8d8" opacity="0.8"/>
<circle cx="677.6" cy="227.2" r="0.7" fill="#dfe8d8" opacity="0.8"/>
<circle cx="650.3" cy="220.3" r="0.5" fill="#dfe8d8" opacity="0.8"/>
<circle cx="679.5" cy="190.5" r="0.6" fill="#dfe8d8" opacity="0.8"/>
<circle cx="645.7" cy="216.9" r="0.6" fill="#dfe8d8" opacity="0.8"/>
<circle cx="659.7" cy="222.3" r="0.8" fill="#dfe8d8" opacity="0.8"/>
<circle cx="685.2" cy="193.5" r="0.5" fill="#dfe8d8" opacity="0.8"/>
<circle cx="690.3" cy="230.9" r="0.9" fill="#dfe8d8" opacity="0.8"/>
<circle cx="650.1" cy="204.3" r="0.9" fill="#dfe8d8" opacity="0.8"/>
<circle cx="692.0" cy="219.9" r="0.9" fill="#dfe8d8" opacity="0.8"/>
<circle cx="665.5" cy="180.9" r="0.7" fill="#dfe8d8" opacity="0.8"/>
<circle cx="689.5" cy="192.7" r="0.8" fill="#dfe8d8" opacity="0.8"/>
<circle cx="663.5" cy="202.5" r="0.8" fill="#dfe8d8" opacity="0.8"/>
<circle cx="650.0" cy="239.5" r="0.7" fill="#dfe8d8" opacity="0.8"/>
<circle cx="659.2" cy="212.3" r="0.6" fill="#dfe8d8" opacity="0.8"/>
<circle cx="654.2" cy="195.5" r="0.9" fill="#dfe8d8" opacity="0.8"/>
<circle cx="670.9" cy="210.5" r="0.8" fill="#dfe8d8" opacity="0.8"/>
<circle cx="647.6" cy="240.4" r="0.8" fill="#dfe8d8" opacity="0.8"/>
<circle cx="675.3" cy="224.3" r="0.7" fill="#dfe8d8" opacity="0.8"/>
<circle cx="691.8" cy="208.5" r="0.7" fill="#dfe8d8" opacity="0.8"/>
<g fill="#a2a2a2"><circle cx="712.6" cy="239.9" r="1.5"/><path d="M710.6 242 L714.6 242 L716.8 244.6 L716 254 L714.6 254.5 L715.2 266.5 L716.4 267.6 L713.6 268 L712.6 258 L710.4 268.2 L708.4 267.4 L710.6 256 L709.4 254 L707.4 254 L709 244.5 Z"/></g>
<path d="M696 266.2 L709 268.4 L709 267.2 L700 265.4 Z" fill="#c4c4c8"/>
</g>
</svg>
</body></html>
